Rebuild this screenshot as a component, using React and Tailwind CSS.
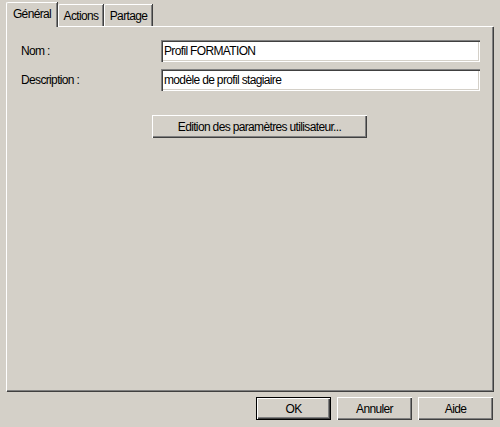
import React from "react";

const font = { fontFamily: '"Liberation Sans", Arial, sans-serif' };

// bordures "Windows classique"
const raised =
  "shadow-[inset_1px_1px_0_#ffffff,inset_-1px_-1px_0_#404040,inset_-2px_-2px_0_#808080]";
const sunken =
  "shadow-[inset_1px_1px_0_#808080,inset_2px_2px_0_#404040,inset_-1px_-1px_0_#ffffff,inset_-2px_-2px_0_#d4d0c8]";

const txt = "text-[12px] tracking-[-0.65px] leading-none text-black";

function Tab({ label, active, width }) {
  return (
    <div
      className={`flex items-center justify-center rounded-tl-[2px] bg-[#d4d0c8] border-t border-l border-white shadow-[inset_-1px_0_0_#808080,1px_0_0_#404040] ${width} ${
        active ? "relative z-10 h-[25px] -mb-px pb-[3px]" : "h-[22px]"
      }`}
    >
      <span className={txt}>{label}</span>
    </div>
  );
}

function Field({ label, value }) {
  return (
    <div className="flex items-center">
      <span className={`w-[140px] ${txt}`}>{label}</span>
      <div className={`flex-1 h-[22px] bg-white ${sunken} flex items-center px-[3px]`}>
        <span className={txt}>{value}</span>
      </div>
    </div>
  );
}

function Button({ label, isDefault, className = "" }) {
  return (
    <div
      className={`h-[23px] flex items-center justify-center bg-[#d4d0c8] ${
        isDefault ? "border border-black" : ""
      } ${className}`}
    >
      <div className={`w-full h-full flex items-center justify-center ${raised}`}>
        <span className={txt}>{label}</span>
      </div>
    </div>
  );
}

export default function App() {
  return (
    <div className="w-[500px] h-[427px] bg-[#d4d0c8] flex flex-col pt-[2px] pl-[6px] pr-[7px]" style={font}>
      {/* Onglets */}
      <div className="flex items-end h-[24px] gap-[1px]">
        <Tab label="Général" active width="w-[51px]" />
        <Tab label="Actions" width="w-[45px]" />
        <Tab label="Partage" width="w-[48px]" />
      </div>

      {/* Panneau */}
      <div className="h-[365px] border-t border-l border-white shadow-[inset_-1px_-1px_0_#808080,1px_1px_0_#404040] flex flex-col pt-[13px] pl-[14px] pr-[13px]">
        <div className="flex flex-col gap-[7px]">
          <Field label="Nom :" value="Profil FORMATION" />
          <Field label="Description :" value="modèle de profil stagiaire" />
        </div>
        <div className="pl-[131px] mt-[24px]">
          <Button label="Edition des paramètres utilisateur..." className="w-[215px]" />
        </div>
      </div>

      {/* Boutons du bas */}
      <div className="flex justify-end gap-[6px] mt-[6px]">
        <Button label="OK" isDefault className="w-[75px]" />
        <Button label="Annuler" className="w-[75px]" />
        <Button label="Aide" className="w-[75px]" />
      </div>
    </div>
  );
}
